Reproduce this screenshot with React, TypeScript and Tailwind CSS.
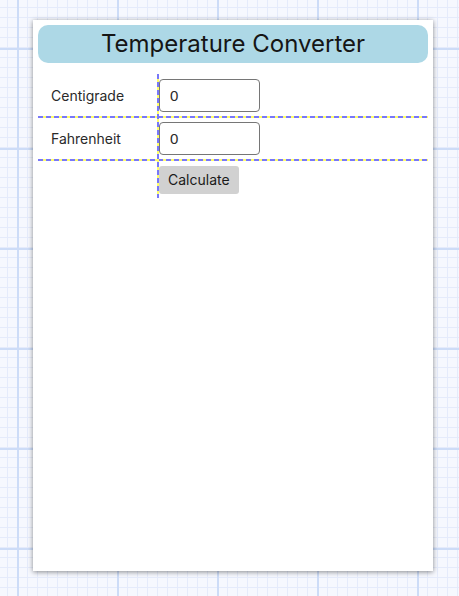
import React from "react";

export default function App() {
  return (
    <div className="min-h-[596px] w-full bg-[#f6f8fe] bg-[image:linear-gradient(to_right,#cddcf7_2px,transparent_2px),linear-gradient(to_bottom,#cddcf7_2px,transparent_2px),linear-gradient(to_right,#e5ebfb_1px,transparent_1px),linear-gradient(to_bottom,#e5ebfb_1px,transparent_1px)] bg-[size:100px_100px,100px_100px,10px_10px,10px_10px] bg-[position:17px_0,0_48px,7px_0,0_7px] pt-[20px] pl-[33px] font-[Inter,sans-serif]">
      <div className="w-[400px] h-[551px] bg-white shadow-[0_1px_5px_rgba(0,0,0,0.45)] p-[5px]">
        <div className="h-[38px] rounded-[10px] bg-[#add8e6] flex items-center justify-center text-[24px] text-[#151515] leading-none">
          Temperature Converter
        </div>
        <div className="mt-[11px] grid grid-cols-[119px_2px_1fr] grid-rows-[42px_2px_41px_2px_37px]">
          <div className="col-start-1 row-start-1 flex items-center pl-[13px] text-[14px] text-[#2a2a2a]">Centigrade</div>
          <div className="col-start-3 row-start-1 flex items-center">
            <input
              defaultValue="0"
              className="w-[101px] h-[33px] border border-[#767676] rounded-[4px] px-[10px] text-[15px] text-[#2a2a2a] bg-white outline-none font-[Liberation_Sans,Arial,sans-serif]"
            />
          </div>
          <div className="col-start-1 col-end-4 row-start-2 bg-[repeating-linear-gradient(to_right,#7878f8_0_5px,#ffff66_5px_8px)]" />
          <div className="col-start-1 row-start-3 flex items-center pl-[13px] text-[14px] text-[#2a2a2a]">Fahrenheit</div>
          <div className="col-start-3 row-start-3 flex items-center">
            <input
              defaultValue="0"
              className="w-[101px] h-[33px] border border-[#767676] rounded-[4px] px-[10px] text-[15px] text-[#2a2a2a] bg-white outline-none font-[Liberation_Sans,Arial,sans-serif]"
            />
          </div>
          <div className="col-start-1 col-end-4 row-start-4 bg-[repeating-linear-gradient(to_right,#7878f8_0_5px,#ffff66_5px_8px)]" />
          <div className="col-start-3 row-start-5 flex items-center">
            <button className="h-[28px] px-[9px] bg-[#d1d1d1] rounded-[3px] text-[14px] text-[#1a1a1a]">Calculate</button>
          </div>
          <div className="col-start-2 row-start-1 row-end-6 bg-[repeating-linear-gradient(to_bottom,#7878f8_0_5px,#ffff66_5px_8px)]" />
        </div>
      </div>
    </div>
  );
}
